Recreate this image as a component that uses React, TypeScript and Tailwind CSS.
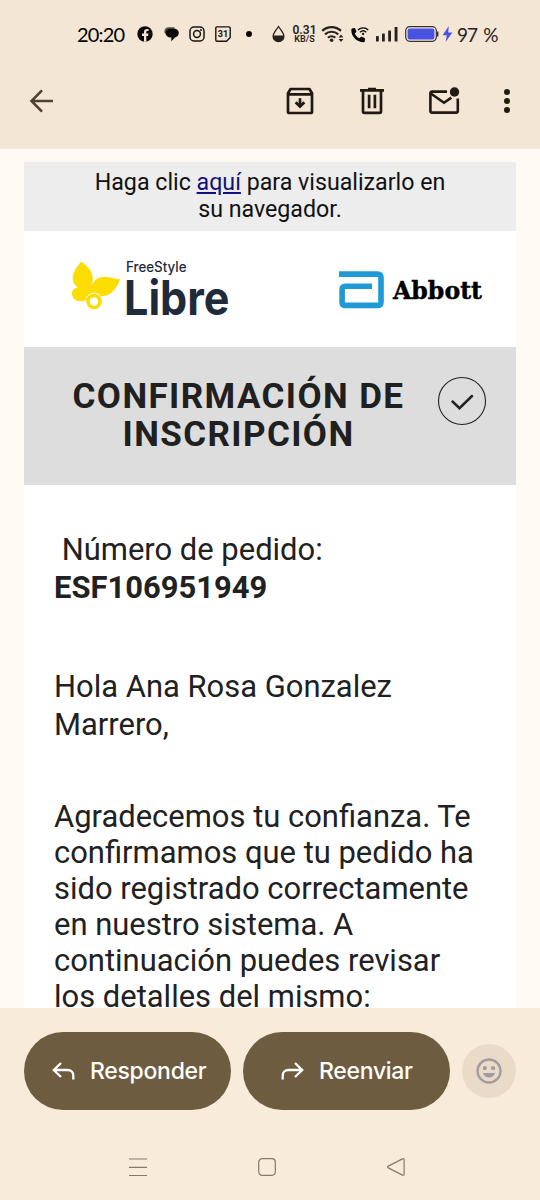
import type { ReactNode } from "react";

function StatusBar() {
  return (
    <div className="flex h-[68px] items-center pl-[77px] text-black">
      <span className="w-[49px] font-['Lato',sans-serif] text-[20px] leading-none tracking-[-0.800px] whitespace-nowrap">
        20:20
      </span>

      {/* facebook */}
      <svg className="ml-[11px] size-4 shrink-0" viewBox="0 0 16 16">
        <circle cx="8" cy="8" r="7.7" fill="#0b0907" />
        <path
          d="M7 15.8V10H5V7.6h2V6.1C7 3.9 8.200 2.900 10.100 2.900h1.400v2.200h-1.100c-.8 0-1.100.4-1.100 1.100v1.400h2.200L11.100 10H9.300v5.800z"
          fill="#f3e6d5"
        />
      </svg>

      {/* messages */}
      <svg className="ml-[11px] h-4 w-[15px] shrink-0" viewBox="0 0 15 16">
        <path d="M.4 5.500C.4 3 1.900 1.200 4.500 1.200h6v3H5.500C3.500 4.200 2 5.500 1.600 8 .9 7.300.4 6.600.4 5.500z" fill="#5a5148" />
        <path
          d="M6 2.800h4.300c2.600 0 4.500 1.800 4.500 4.300 0 2.300-1.700 4-3.800 4.300L7.300 15.300v-3.900H6c-2.500 0-4.400-1.900-4.400-4.300S3.500 2.800 6 2.800z"
          fill="#0b0907"
        />
      </svg>

      {/* instagram */}
      <svg className="ml-[10px] size-4 shrink-0" viewBox="0 0 16 16" fill="none" stroke="#1a1612">
        <rect x="1" y="1" width="14" height="14" rx="4" strokeWidth="1.500" />
        <circle cx="8" cy="8" r="3.400" strokeWidth="1.500" />
        <circle cx="12" cy="4.100" r="1" fill="#1a1612" stroke="none" />
      </svg>

      {/* calendar */}
      <svg className="ml-[10px] size-4 shrink-0" viewBox="0 0 16 16">
        <path
          d="M2 .9h12c.7 0 1.200.5 1.200 1.200v9.400L11.500 15.200H2C1.300 15.200.8 14.700.8 14V2.100C.8 1.400 1.300.9 2 .9z"
          fill="none"
          stroke="#1a1612"
          strokeWidth="1.400"
        />
        <text
          x="8"
          y="11.200"
          textAnchor="middle"
          fontFamily="Roboto, sans-serif"
          fontSize="9"
          fontWeight="700"
          fill="#1a1612"
        >
          31
        </text>
      </svg>

      <span className="ml-[15px] size-1.5 shrink-0 rounded-full bg-[#0b0907]" />

      {/* drop */}
      <svg className="ml-[20px] h-[18px] w-[13px] shrink-0" viewBox="0 0 13 18">
        <path
          d="M6.500 1.500C4.500 4.500 1.100 7.800 1.100 11.300a5.400 5.400 0 0 0 10.800 0C11.900 7.800 8.500 4.500 6.500 1.500z"
          fill="none"
          stroke="#29221c"
          strokeWidth="1.300"
        />
        <path d="M1.100 10.500h10.800v.8a5.400 5.400 0 0 1-10.800 0z" fill="#29221c" />
      </svg>

      <span className="ml-[8px] flex w-[23px] shrink-0 flex-col items-center font-['Roboto',sans-serif] font-semibold text-[#29221c]">
        <span className="text-[12px] leading-[10px]">0.31</span>
        <span className="text-[9px] leading-[9px]">KB/S</span>
      </span>

      {/* wifi */}
      <svg className="ml-[5px] h-[18px] w-[23px] shrink-0" viewBox="0 0 23 18" fill="none" stroke="#29221c">
        <path d="M1.200 5.900a13.500 13.500 0 0 1 18.800 0" strokeWidth="2.200" />
        <path d="M4 9.400a9.500 9.500 0 0 1 13.200 0" strokeWidth="2.200" />
        <path d="M6.900 12.700a5.500 5.500 0 0 1 7.400 0" strokeWidth="2.200" />
        <circle cx="10.600" cy="15.300" r="1.800" fill="#29221c" stroke="none" />
        <path d="M20 9.500l2.400 3h-4.800zM20 17l2.400-3h-4.800z" fill="#29221c" stroke="none" />
      </svg>

      {/* wifi call */}
      <svg className="ml-[7px] h-[17px] w-[18px] shrink-0" viewBox="0 0 18 17">
        <path
          d="M1.300 2.300L4 2.100l1.500 3.600-1.700 1.700c1 2.200 2.500 3.800 4.700 4.900l1.700-1.700 3.900 1.700-.3 2.900c-.3.900-1.100 1.200-2 1.100C5.600 15.900.6 10.900.3 4.600c0-1 .3-2 1-2.300z"
          fill="#0b0907"
        />
        <path d="M7 3.900a7.500 7.500 0 0 1 10.200 0M9 6.200a4.700 4.700 0 0 1 6.200 0" fill="none" stroke="#0b0907" strokeWidth="1.400" />
        <circle cx="12.100" cy="7.900" r="1.100" fill="#0b0907" />
      </svg>

      {/* signal */}
      <svg className="ml-[7px] h-4 w-[22px] shrink-0" viewBox="0 0 22 16" fill="#29221c">
        <rect x="0" y="10" width="2.800" height="5.500" rx=".6" />
        <rect x="6" y="7.500" width="2.800" height="8" rx=".6" />
        <rect x="12.200" y="4.500" width="2.800" height="11" rx=".6" />
        <rect x="18.600" y="1" width="2.900" height="14.500" rx=".6" />
      </svg>

      {/* battery */}
      <svg className="ml-[7px] h-4 w-[34px] shrink-0" viewBox="0 0 34 16">
        <rect x=".7" y=".7" width="30.600" height="14.600" rx="4" fill="none" stroke="#3a3230" strokeWidth="1.200" />
        <rect x="2.600" y="2.600" width="26.800" height="10.800" rx="2" fill="#4a52e4" />
        <path d="M32.700 5.500v5" stroke="#3a3230" strokeWidth="1.500" />
      </svg>
      <svg className="ml-[3px] h-4 w-[11px] shrink-0" viewBox="0 0 11 16">
        <path d="M6.800 0L.6 9.200h4.200L3.600 16l6.800-9.600H6.200z" fill="#4a52e4" />
      </svg>

      <span className="ml-[4px] font-['Lato',sans-serif] text-[19px] leading-none tracking-[-0.900px] [word-spacing:2px] whitespace-nowrap text-[#29221c]">
        97 %
      </span>
    </div>
  );
}

function Toolbar() {
  return (
    <div className="flex h-[66px] items-center pr-[30px] pl-[29px] text-[#211a12]">
      <svg className="h-6 w-[25px]" viewBox="0 0 25 24" fill="none" stroke="#4d4435" strokeWidth="2.600">
        <path d="M13 1.400L2.500 12 13 22.600M2 12h22" />
      </svg>

      {/* archive */}
      <svg className="ml-[232px] size-7" viewBox="0 0 28 28" fill="none" stroke="currentColor" strokeWidth="2.700">
        <path d="M2 6.300L4.600 2h18.800L26 6.300v18.400c0 .8-.5 1.300-1.300 1.300H3.300C2.500 26 2 25.500 2 24.700zM2 7.300h24" strokeLinejoin="round" />
        <path d="M14 11.200v8" />
        <path d="M9.700 15.200l4.300 4.300 4.300-4.300" strokeWidth="3" />
      </svg>

      {/* delete */}
      <svg className="ml-[46px] h-7 w-6" viewBox="0 0 24 28" fill="none" stroke="currentColor" strokeWidth="2.700">
        <path d="M0 3.400h24M8 2h8" />
        <path d="M3 3.400v21.100c0 .9.500 1.400 1.400 1.400h15.200c.9 0 1.400-.5 1.400-1.400V3.400M9.100 7.800v13.500M14.900 7.800v13.500" />
      </svg>

      {/* mark as unread */}
      <svg className="ml-[44px] h-7 w-8" viewBox="0 0 32 28" fill="none" stroke="currentColor" strokeWidth="2.600">
        <path d="M19 4.600H4c-.9 0-1.600.7-1.600 1.500v18c0 .9.700 1.500 1.600 1.500h24.200c.9 0 1.600-.6 1.600-1.500V11.400" />
        <path d="M2.800 6.500L16 15.700l7.400-5.100" />
        <circle cx="26.500" cy="5" r="4.700" fill="currentColor" stroke="none" />
      </svg>

      <svg className="ml-auto h-6 w-1.5" viewBox="0 0 6 24" fill="currentColor">
        <circle cx="3" cy="3" r="3" />
        <circle cx="3" cy="12" r="3" />
        <circle cx="3" cy="21" r="3" />
      </svg>
    </div>
  );
}

function FreeStyleLogo() {
  return (
    <svg className="h-[68px] w-[170px] overflow-visible" viewBox="0 0 170 68">
      <g fill="#fddd00">
        <path d="M11.700 1.500C18.500 5.500 24 12 23.700 18.500L23.200 25.500C25 19.500 31 16 38 17C43 17.700 47 19 51 19.300C48.500 27 43 35.500 34.300 36C31 36.200 28 35 26 33.500C22 34.500 19.500 36.500 17.700 39.500C12.500 43 3.500 41.500 3 34C2.800 30.500 5.500 27.600 9 27.200C2.500 24 2.800 16.500 5.500 11C7.500 7 10 5 11.700 1.500z" />
        <circle cx="25" cy="41.500" r="7.800" />
      </g>
      <circle cx="25" cy="41.500" r="4.200" fill="#fff" />
      <path d="M16.800 38.500C19 34 25 31.500 30.500 34.800" stroke="#fff" strokeWidth="1" fill="none" />
      <text x="57" y="12" textLength="60.500" lengthAdjust="spacingAndGlyphs" fontFamily="Inter, sans-serif" fontSize="14" fontWeight="500" fill="#1f2b3b">
        FreeStyle
      </text>
      <text x="55" y="54.500" textLength="105.500" lengthAdjust="spacingAndGlyphs" fontFamily="Inter, sans-serif" fontSize="48" fontWeight="700" fill="#1f2b3b">
        Libre
      </text>
    </svg>
  );
}

function AbbottLogo() {
  return (
    <svg className="h-[38px] w-[145px]" viewBox="0 0 145 38">
      <path
        d="M1 3.100h38.500c2.200 0 3.500 1.300 3.500 3.500v24.300c0 2.200-1.300 3.500-3.500 3.500H7.600c-2.200 0-3.500-1.300-3.500-3.500V18.700c0-2.200 1.300-3.500 3.500-3.500H34"
        fill="none"
        stroke="#1f9ad7"
        strokeWidth="5.600"
      />
      <text x="55" y="28" textLength="89" lengthAdjust="spacingAndGlyphs" fontFamily="'DejaVu Serif', serif" fontSize="24" fontWeight="700" fill="#000" stroke="#000" strokeWidth=".4">
        Abbott
      </text>
    </svg>
  );
}

function ActionButton({ icon, children }: { icon: ReactNode; children: ReactNode }) {
  return (
    <button className="flex h-[78px] w-[207px] items-center rounded-full bg-[#6d5c3f] pl-7 font-['Inter',sans-serif] text-[23px] font-medium tracking-[-0.300px] text-white">
      {icon}
      <span className="ml-[15px] whitespace-nowrap">{children}</span>
    </button>
  );
}

export default function App() {
  return (
    <div className="flex h-[1200px] w-[540px] flex-col overflow-hidden bg-[#fef9f3] font-['Roboto',sans-serif]">
      <header className="h-[149px] shrink-0 bg-[#f3e6d5]">
        <StatusBar />
        <Toolbar />
      </header>

      <main className="mx-6 mt-[13px] h-[846px] shrink-0 overflow-hidden bg-white text-[#212121]">
        <p className="h-[69px] bg-[#ededed] pt-[7px] text-center text-[23.200px] leading-[27px] text-[#111]">
          Haga clic{" "}
          <a href="#" className="text-[#12127d] underline">
            aquí
          </a>{" "}
          para visualizarlo en
          <br />
          su navegador.
        </p>

        <div className="flex h-[116px] items-start justify-between pr-[33px] pl-[45px]">
          <div className="pt-[29px]">
            <FreeStyleLogo />
          </div>
          <div className="pt-[40px]">
            <AbbottLogo />
          </div>
        </div>

        <div className="flex h-[138px] items-start bg-[#ddd] pl-[30px]">
          <h1 className="w-[369px] pt-[31px] text-center text-[35px] leading-[38px] font-bold tracking-[1.400px] whitespace-nowrap text-[#202020]">
            CONFIRMACIÓN DE
            <br />
            INSCRIPCIÓN
          </h1>
          <svg className="mt-[29px] ml-[14px] size-[50px]" viewBox="0 0 50 50" fill="none" stroke="#222">
            <circle cx="25" cy="25" r="23.500" strokeWidth="1.100" />
            <path d="M15.500 25.500l7 6.700L35 20" strokeWidth="2.500" strokeLinecap="round" />
          </svg>
        </div>

        <div className="px-[30px] pt-[46px] text-[30.950px]">
          <p className="leading-[38px]">
            &nbsp;Número de pedido:
            <br />
            <b>ESF106951949</b>
          </p>
          <p className="mt-[61px] leading-[38px]">
            Hola Ana Rosa Gonzalez
            <br />
            Marrero,
          </p>
          <p className="mt-[55px] leading-[36px] whitespace-nowrap">
            Agradecemos tu confianza. Te
            <br />
            confirmamos que tu pedido ha
            <br />
            sido registrado correctamente
            <br />
            en nuestro sistema. A<br />
            continuación puedes revisar
            <br />
            los detalles del mismo:
          </p>
        </div>
      </main>

      <footer className="flex-1 bg-[#f9ebda] pt-6">
        <div className="flex items-center gap-3 px-6">
          <ActionButton
            icon={
              <svg className="h-[18px] w-[23px]" viewBox="0 0 23 18" fill="none" stroke="currentColor" strokeWidth="2.300">
                <path d="M9 1L1.800 8 9 15M2 8h13.500c3.500 0 5.800 2.300 5.800 5.500v4" />
              </svg>
            }
          >
            Responder
          </ActionButton>
          <ActionButton
            icon={
              <svg className="ml-[10px] h-[18px] w-[23px]" viewBox="0 0 23 18" fill="none" stroke="currentColor" strokeWidth="2.300">
                <path d="M14 1l7.200 7L14 15M21 8H7.500C4 8 1.700 10.300 1.700 13.500v4" />
              </svg>
            }
          >
            Reenviar
          </ActionButton>
          <button className="flex size-[54px] items-center justify-center rounded-full bg-[#eadbc9]">
            <svg className="size-[26px]" viewBox="0 0 26 26" fill="#a29c9e">
              <circle cx="13" cy="13" r="11.500" fill="none" stroke="#a29c9e" strokeWidth="2.300" />
              <rect x="7" y="8.300" width="3.700" height="3.700" rx="1" />
              <rect x="15.300" y="8.300" width="3.700" height="3.700" rx="1" />
              <path d="M6.800 15h12.400c-1.100 3-3.400 4.600-6.200 4.600S7.900 18 6.800 15z" />
            </svg>
          </button>
        </div>

        <nav className="mt-[47px] flex gap-[109px] pl-[128px]">
          <svg className="size-5" viewBox="0 0 20 20" stroke="#85796c" strokeWidth="1.200">
            <path d="M1 2h18M1 10.300h18M1 18.500h18" />
          </svg>
          <svg className="size-5" viewBox="0 0 20 20" fill="none" stroke="#85796c" strokeWidth="1.200">
            <rect x="1.700" y="1.700" width="16.600" height="16.600" rx="3.500" />
          </svg>
          <svg className="size-5" viewBox="0 0 20 20" fill="none" stroke="#85796c" strokeWidth="1.200">
            <path d="M16.500 1.900L2.300 9.100q-1.600.9 0 1.800L16.500 18.100q1.600.6 1.600-1V2.900q0-1.600-1.600-1z" />
          </svg>
        </nav>
      </footer>
    </div>
  );
}
